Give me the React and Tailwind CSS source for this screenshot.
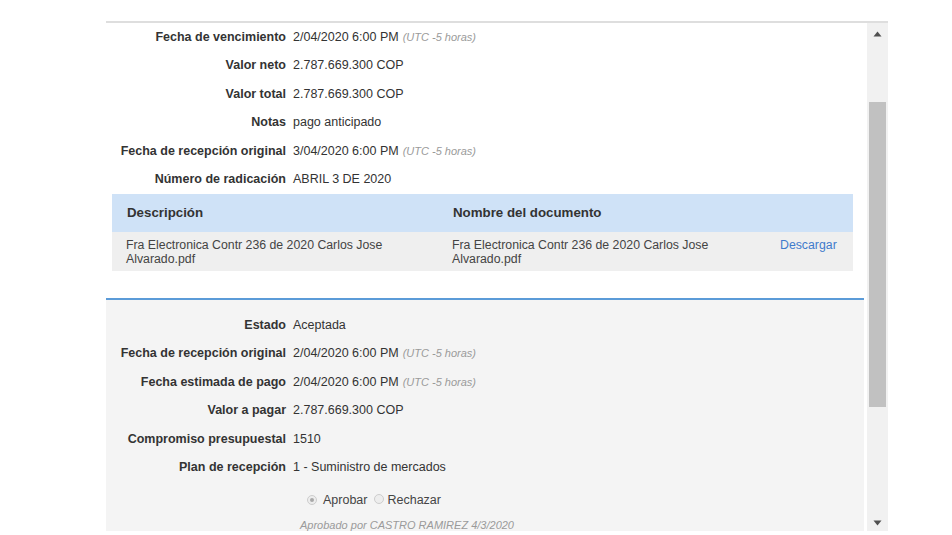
import React from "react";

const font = { fontFamily: '"Liberation Sans", Arial, sans-serif' };

function Row({ label, children }) {
  return (
    <div className="flex h-[28.5px] items-center text-[12.5px] text-[#333]">
      <div className="w-[187px] shrink-0 pr-[7px] text-right font-bold">{label}</div>
      <div className="flex items-baseline">{children}</div>
    </div>
  );
}

function Utc() {
  return <span className="ml-[4px] text-[11px] italic text-[#9a9a9a]">(UTC -5 horas)</span>;
}

function Radio({ checked }) {
  return (
    <span className="inline-flex h-[10px] w-[10px] items-center justify-center rounded-full border border-[#cdcdcd] bg-[#ededed]">
      {checked && <span className="h-[4px] w-[4px] rounded-full bg-[#a8a8a8]" />}
    </span>
  );
}

export default function App() {
  return (
    <div className="h-[535px] w-[952px] bg-white" style={font}>
      <div className="pt-[21px] pl-[106px]">
        <div className="flex h-[510px] w-[782px] border-t-2 border-[#dedede]">
          <div className="w-[761px] overflow-hidden">
            <Row label="Fecha de vencimiento">
              2/04/2020 6:00 PM <Utc />
            </Row>
            <Row label="Valor neto">2.787.669.300 COP</Row>
            <Row label="Valor total">2.787.669.300 COP</Row>
            <Row label="Notas">pago anticipado</Row>
            <Row label="Fecha de recepción original">
              3/04/2020 6:00 PM <Utc />
            </Row>
            <Row label="Número de radicación">ABRIL 3 DE 2020</Row>

            <div className="ml-[6px] w-[741px]">
              <div className="flex h-[38px] items-center bg-[#cfe2f7] text-[13.3px] font-bold text-[#333]">
                <div className="w-[328px] pl-[15px]">Descripción</div>
                <div className="pl-[13px]">Nombre del documento</div>
              </div>
              <div className="flex h-[39px] items-center bg-[#efefef] text-[12.3px] leading-[14px] text-[#444]">
                <div className="w-[328px] pl-[14px] pr-[20px]">
                  Fra Electronica Contr 236 de 2020 Carlos Jose Alvarado.pdf
                </div>
                <div className="w-[340px] pl-[12px] pr-[30px]">
                  Fra Electronica Contr 236 de 2020 Carlos Jose Alvarado.pdf
                </div>
                <div className="self-start pt-[6px] text-[#3f7bcc]">Descargar</div>
              </div>
            </div>

            <div className="mt-[27px] mr-[3px] h-[300px] border-t-2 border-[#5b9bd8] bg-[#f4f4f4] pt-[11px]">
              <Row label="Estado">Aceptada</Row>
              <Row label="Fecha de recepción original">
                2/04/2020 6:00 PM <Utc />
              </Row>
              <Row label="Fecha estimada de pago">
                2/04/2020 6:00 PM <Utc />
              </Row>
              <Row label="Valor a pagar">2.787.669.300 COP</Row>
              <Row label="Compromiso presupuestal">1510</Row>
              <Row label="Plan de recepción">1 - Suministro de mercados</Row>
              <div className="flex h-[32px] items-center pl-[201px] pt-[4px] text-[12.5px] text-[#444]">
                <Radio checked />
                <span className="ml-[6px]">Aprobar</span>
                <span className="ml-[7px]">
                  <Radio />
                </span>
                <span className="ml-[3px]">Rechazar</span>
              </div>
              <div className="flex h-[22px] items-center pl-[194px] text-[11px] italic text-[#9a9a9a]">
                Aprobado por CASTRO RAMIREZ 4/3/2020
              </div>
            </div>
          </div>
          <div className="relative w-[21px] bg-[#f1f1f1]">
            <svg className="absolute left-[6px] top-[8px]" width="9" height="6" viewBox="0 0 9 6">
              <polygon points="4.5,0.5 8.5,5.5 0.5,5.5" fill="#505050" />
            </svg>
            <div className="absolute left-[2px] top-[79px] h-[305px] w-[17px] bg-[#c1c1c1]" />
            <svg className="absolute left-[6px] top-[497px]" width="9" height="6" viewBox="0 0 9 6">
              <polygon points="0.5,0.5 8.5,0.5 4.5,5.5" fill="#505050" />
            </svg>
          </div>
        </div>
      </div>
    </div>
  );
}
